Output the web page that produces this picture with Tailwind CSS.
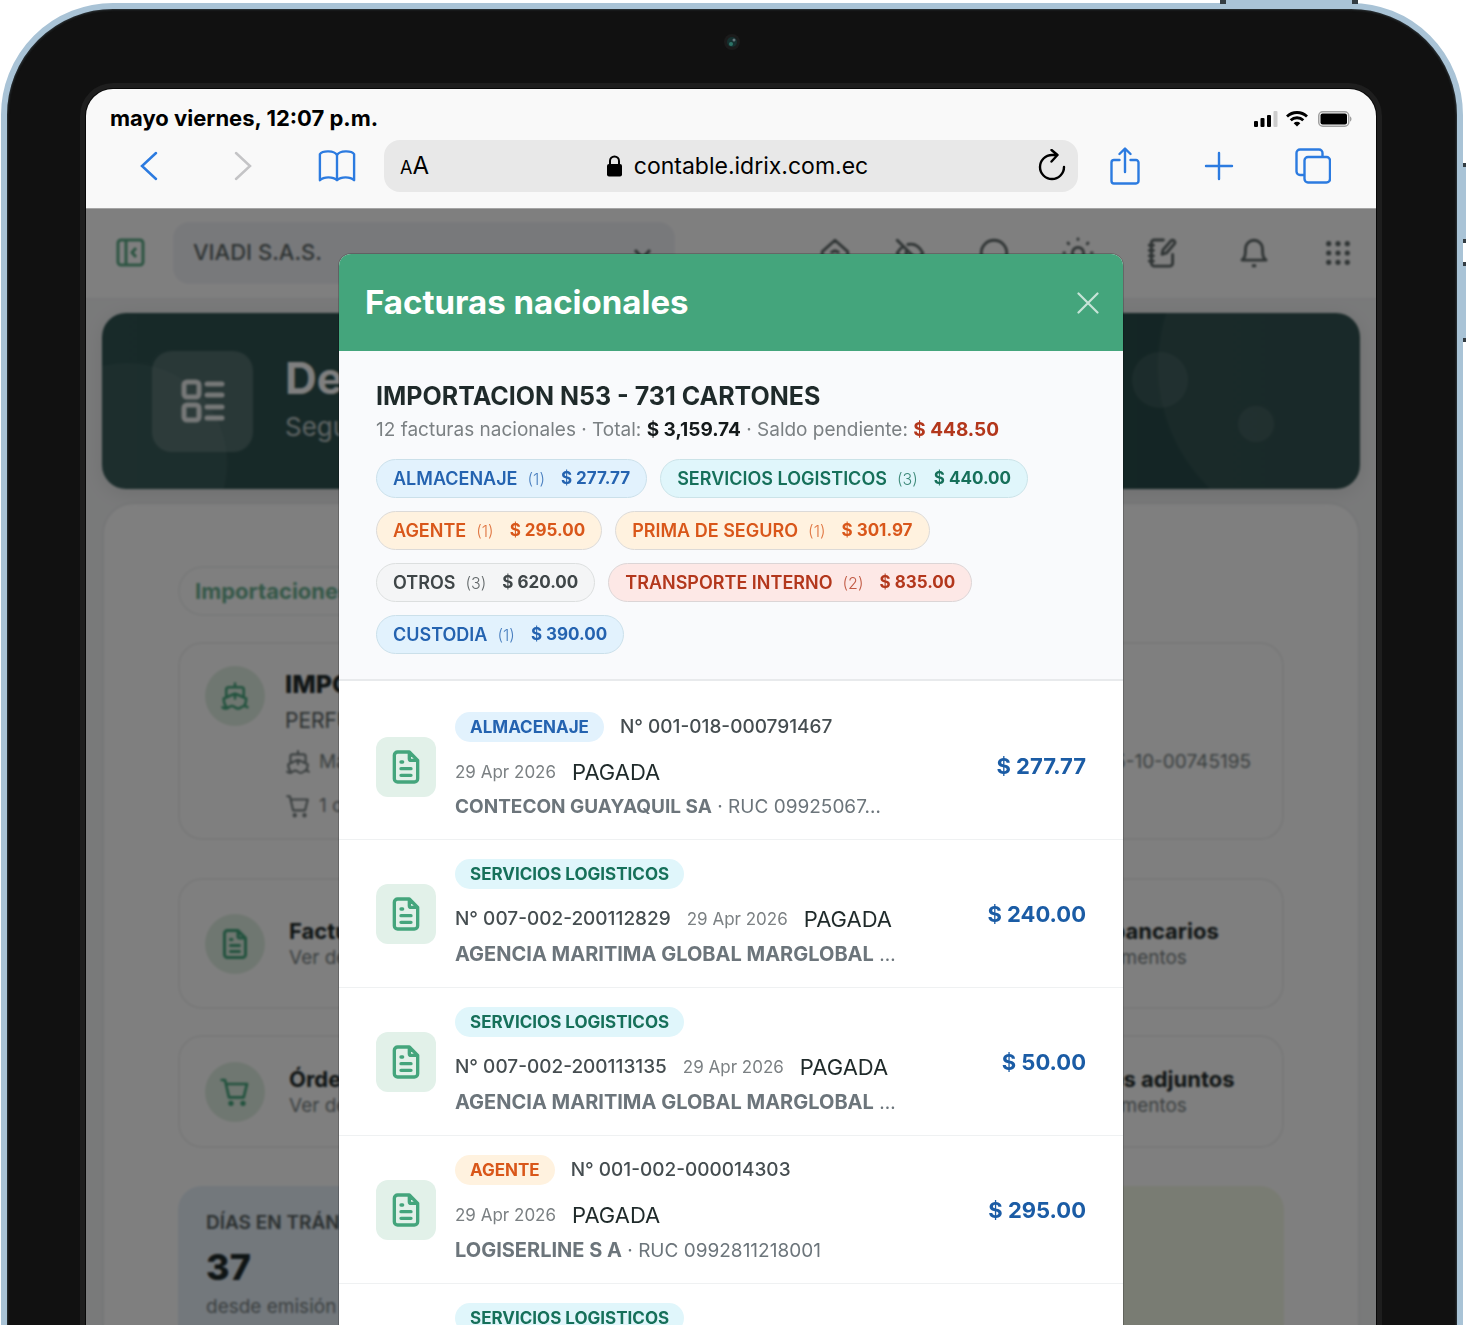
<!DOCTYPE html>
<html lang="es">
<head>
  <meta charset="UTF-8" />
  <meta name="viewport" content="width=device-width, initial-scale=1.0" />
  <title>Facturas nacionales</title>
  <script src="https://cdn.jsdelivr.net/npm/@tailwindcss/browser@4"></script>
</head>
<body class="bg-white font-['Inter',sans-serif] h-screen overflow-hidden text-[#1f2a2a]">

  <!-- Iconos compartidos -->
  <svg class="hidden">
    <symbol id="file" viewBox="0 0 24 24" fill="none" stroke="currentColor" stroke-width="2" stroke-linecap="round" stroke-linejoin="round"><path d="M14 3v4a1 1 0 0 0 1 1h4M17 21H7a2 2 0 0 1-2-2V5a2 2 0 0 1 2-2h7l5 5v11a2 2 0 0 1-2 2zM9 9h1M9 13h6M9 17h6"/></symbol>
    <symbol id="ship" viewBox="0 0 24 24" fill="none" stroke="currentColor" stroke-width="2" stroke-linecap="round" stroke-linejoin="round"><path d="M12 10.200V14M12 2v3M19 13V7a2 2 0 0 0-2-2H7a2 2 0 0 0-2 2v6M19.400 20A11.600 11.600 0 0 0 21 14l-8.200-3.600a2 2 0 0 0-1.600 0L3 14a11.600 11.600 0 0 0 2.800 7.800M2 21c.6.5 1.200 1 2.500 1 2.500 0 2.500-2 5-2 1.300 0 1.900.5 2.500 1 .6.5 1.200 1 2.500 1 2.500 0 2.500-2 5-2 1.300 0 1.900.5 2.500 1"/></symbol>
    <symbol id="cart" viewBox="0 0 24 24" fill="none" stroke="currentColor" stroke-width="2" stroke-linecap="round" stroke-linejoin="round"><path d="M2 3h2.500l3 13h11l2.500-10H5.500"/><circle cx="9" cy="20.500" r="1" fill="currentColor"/><circle cx="18" cy="20.500" r="1" fill="currentColor"/></symbol>
  </svg>

  <!-- Tableta -->
  <div class="relative mt-[3px] ml-px mr-[3px] h-[1700px] rounded-[112px] border-[6px] border-[#a9c3d6] bg-[#111] pt-[80px] pl-[79px] pr-[81px] shadow-[inset_0_0_2px_1px_#2c3438]">
    <div class="absolute -top-[10px] right-[99px] h-[5px] w-[138px] border-x-[6px] border-[#333c42] bg-[#a9c3d6]"></div>
    <div class="absolute top-[154px] -right-[10px] h-[80px] w-1 border-y-4 border-[#333c42] bg-[#a9c3d6]"></div>
    <div class="absolute top-[253px] -right-[10px] h-[80px] w-1 border-y-4 border-[#333c42] bg-[#a9c3d6]"></div>
    <svg class="absolute top-[24px] left-1/2 -translate-x-1/2" width="18" height="18" viewBox="0 0 18 18"><circle cx="9" cy="9" r="8" fill="#1b1b1b"/><circle cx="9" cy="9" r="5" fill="#16302f"/><circle cx="8" cy="11" r="2" fill="#2c7467"/><circle cx="11" cy="7" r="1.500" fill="#64747a"/></svg>

    <div class="flex h-full flex-col overflow-hidden rounded-[27px] bg-[#f9f9f9] shadow-[0_0_0_1px_#080808,0_0_0_6px_#1e1e1e]">

      <!-- Safari -->
      <header class="border-b border-[#a5a5a5] pb-4 text-black">
        <div class="flex h-[51px] items-center justify-between pt-2 pr-6 pl-6">
          <span class="text-[22px] font-bold">mayo viernes, 12:07 p.m.</span>
          <div class="flex items-center gap-2">
            <svg width="24" height="16" viewBox="0 0 24 16"><rect x="0" y="10" width="4" height="6" rx="1"/><rect x="6.500" y="7" width="4" height="9" rx="1"/><rect x="13" y="4" width="4" height="12" rx="1"/><rect x="19.500" y="0" width="4" height="16" rx="1" fill="#ccc"/></svg>
            <svg width="22" height="16" viewBox="0 0 22 16" fill="none" stroke="#000" stroke-width="2.800"><path d="M1 5.500a14.500 14.500 0 0 1 20 0M4.700 9.300a9 9 0 0 1 12.600 0"/><path d="M11 15.500l-3.300-3.300a4.700 4.700 0 0 1 6.600 0z" fill="#000" stroke="none"/></svg>
            <svg class="ml-[2px]" width="34" height="16" viewBox="0 0 34 16"><rect x=".75" y=".75" width="30" height="14.500" rx="4" fill="none" stroke="#a0a0a0" stroke-width="1.500"/><rect x="2.500" y="2.500" width="26.500" height="11" rx="2" /><path d="M32 5.500c2 .5 2 4.500 0 5z" fill="#a0a0a0"/></svg>
          </div>
        </div>
        <div class="flex items-center px-4 text-[#2c7be0]">
          <button aria-label="Atrás" class="flex w-[94px] justify-center"><svg width="18" height="30" viewBox="0 0 18 30" fill="none" stroke="currentColor" stroke-width="2.500" stroke-linecap="round"><path d="M16 2L2 15l14 13"/></svg></button>
          <button aria-label="Adelante" class="flex w-[94px] justify-center text-[#c4c4c6]"><svg width="18" height="30" viewBox="0 0 18 30" fill="none" stroke="currentColor" stroke-width="2.500" stroke-linecap="round"><path d="M2 2l14 13L2 28"/></svg></button>
          <button aria-label="Marcadores" class="flex w-[94px] justify-center"><svg width="38" height="34" viewBox="0 0 40 34" fill="none" stroke="currentColor" stroke-width="2.500" stroke-linejoin="round"><path d="M20 5.500C17 .5 5 .5 2 4.500V32c4-4 14-4 18 0c4-4 14-4 18 0V4.500C35 .5 23 .5 20 5.500zV32"/></svg></button>
          <div class="flex h-[52px] flex-1 items-center rounded-2xl bg-[#e8e8e8] pr-3 pl-4 text-black">
            <button aria-label="Tamaño de texto" class="flex items-baseline text-[18px]">A<span class="text-[24px]">A</span></button>
            <div class="ml-2 flex flex-1 items-center justify-center gap-3">
              <svg width="15" height="22" viewBox="0 0 15 22"><rect y="9" width="15" height="12.500" rx="2"/><path d="M3 10V6a4.500 4.500 0 0 1 9 0v4" fill="none" stroke="#000" stroke-width="2"/></svg>
              <input aria-label="Dirección" class="field-sizing-content bg-transparent text-[23px] outline-none" value="contable.idrix.com.ec" />
            </div>
            <button aria-label="Recargar"><svg width="28" height="34" viewBox="0 0 28 34" fill="none" stroke="#000" stroke-width="2.400" stroke-linecap="round" stroke-linejoin="round"><path d="M26 18a12 12 0 1 1-12-12h5M13.500 1l6 5-6 6.500"/></svg></button>
          </div>
          <button aria-label="Compartir" class="flex w-[94px] justify-center"><svg width="30" height="38" viewBox="0 0 30 38" fill="none" stroke="currentColor" stroke-width="2.400" stroke-linecap="round" stroke-linejoin="round"><path d="M9.500 13H4a2.500 2.500 0 0 0-2.500 2.500V34A2.500 2.500 0 0 0 4 36.500h22a2.500 2.500 0 0 0 2.500-2.500V15.500A2.500 2.500 0 0 0 26 13h-5.500M15 25V2M9.500 7L15 1.500 20.500 7"/></svg></button>
          <button aria-label="Nueva pestaña" class="flex w-[94px] justify-center"><svg width="30" height="30" viewBox="0 0 30 30" stroke="currentColor" stroke-width="2.400" stroke-linecap="round"><path d="M15 2v26M2 15h26"/></svg></button>
          <button aria-label="Pestañas" class="flex w-[94px] justify-center"><svg width="36" height="36" viewBox="0 0 36 36" fill="none" stroke="currentColor" stroke-width="2.400"><path d="M27.500 9V5a3.500 3.500 0 0 0-3.500-3.500H5A3.500 3.500 0 0 0 1.500 5v18.500A3.500 3.500 0 0 0 5 27h4"/><rect x="9.500" y="9" width="25.500" height="25.500" rx="3.500"/></svg></button>
        </div>
      </header>

      <div class="relative flex-1 overflow-hidden bg-[#f3f4f5]">

        <!-- Barra de la aplicación -->
        <nav class="flex h-[90px] items-center justify-between border-b border-[#eceded] bg-white pr-2 pb-[2px] pl-[30px] text-[#5e6868]">
          <div class="flex items-center gap-7">
            <button aria-label="Menú" class="text-[#5aa985]"><svg width="29" height="29" viewBox="0 0 29 29" fill="none" stroke="currentColor" stroke-width="3" stroke-linejoin="round"><rect x="2" y="2" width="25" height="25" rx="3"/><path d="M10 2v25M20 10l-4 4.500 4 4.500"/></svg></button>
            <div class="relative">
              <select aria-label="Empresa" class="h-[62px] w-[502px] appearance-none rounded-2xl bg-[#f1f3f7] px-5 text-[22px] font-medium"><option>VIADI S.A.S.</option></select>
              <svg class="absolute top-6 right-6" width="17" height="17" viewBox="0 0 17 17" fill="none" stroke="currentColor" stroke-width="3"><path d="M1 4l7.500 8L16 4"/></svg>
            </div>
          </div>
          <div class="flex items-center gap-6">
            <button aria-label="Inicio" class="flex w-[42px] justify-center"><svg width="34" height="34" viewBox="0 0 24 24" fill="none" stroke="currentColor" stroke-width="2" stroke-linejoin="round"><path d="M3 11l9-8 9 8v8a2 2 0 0 1-2 2H5a2 2 0 0 1-2-2zM9 12c2-2 4-2 6 0"/></svg></button>
            <button aria-label="Ocultar" class="flex w-15 justify-center"><svg width="34" height="34" viewBox="0 0 24 24" fill="none" stroke="currentColor" stroke-width="2" stroke-linecap="round"><path d="M3 3l18 18M10.500 6c5-1 8.500 2 10.500 6-.6 1.200-1.300 2.200-2.200 3M7 7.500c-1.600 1-3 2.500-4 4.500 3 6 8.500 7.500 13 5M10 10a2.800 2.800 0 0 0 4 4"/></svg></button>
            <button aria-label="Buscar" class="flex w-15 justify-center"><svg width="34" height="34" viewBox="0 0 24 24" fill="none" stroke="currentColor" stroke-width="2"><circle cx="12" cy="12" r="9"/></svg></button>
            <button aria-label="Tema" class="flex w-15 justify-center"><svg width="34" height="34" viewBox="0 0 24 24" fill="none" stroke="currentColor" stroke-width="2" stroke-linecap="round"><circle cx="12" cy="12" r="4"/><path d="M12 2v.5M12 21.500v.5M2 12h.5M21.500 12h.5M5 5l.4.4M18.600 18.600l.4.4M19 5l-.4.4M5.400 18.600l-.4.4"/></svg></button>
            <button aria-label="Notas" class="flex w-15 justify-center"><svg width="34" height="34" viewBox="0 0 24 24" fill="none" stroke="currentColor" stroke-width="2" stroke-linecap="round" stroke-linejoin="round"><path d="M13 2.800H6.500a2 2 0 0 0-2 2v14.500a2 2 0 0 0 2 2h11a2 2 0 0 0 2-2V13M3 6.500h3M3 10.200h3M3 14h3M3 17.700h3M18.300 3.400a1.500 1.500 0 0 1 2.400 2.200l-5.500 6.400-3.200 1 .7-3.200z"/></svg></button>
            <button aria-label="Avisos" class="ml-2 flex w-15 justify-center"><svg width="34" height="34" viewBox="0 0 24 24" fill="none" stroke="currentColor" stroke-width="2" stroke-linejoin="round"><path d="M3.500 17c2-1.500 2.500-3 2.500-8a6 6 0 0 1 12 0c0 5 .5 6.500 2.500 8zM10.500 21h3"/></svg></button>
            <button aria-label="Aplicaciones" class="flex w-15 justify-center"><svg width="26" height="26" viewBox="0 0 28 28" fill="currentColor"><circle cx="4" cy="4" r="2.800"/><circle cx="14" cy="4" r="2.800"/><circle cx="24" cy="4" r="2.800"/><circle cx="4" cy="14" r="2.800"/><circle cx="14" cy="14" r="2.800"/><circle cx="24" cy="14" r="2.800"/><circle cx="4" cy="24" r="2.800"/><circle cx="14" cy="24" r="2.800"/><circle cx="24" cy="24" r="2.800"/></svg></button>
          </div>
        </nav>

        <!-- Encabezado -->
        <main class="px-4 pt-[14px]">
          <section class="relative flex h-[176px] items-center gap-8 overflow-hidden rounded-3xl bg-linear-to-r from-[#305452] to-[#284a49] px-[50px] shadow-[0_4px_20px_#00000018]">
            <div class="absolute top-[50px] -left-[75px] size-[200px] rounded-full bg-white/5"></div>
            <div class="absolute -top-[118px] -right-[140px] size-[342px] rounded-full bg-white/5"></div>
            <div class="absolute top-[39px] right-[172px] size-[56px] rounded-full bg-white/8"></div>
            <div class="absolute top-[93px] right-[86px] size-[36px] rounded-full bg-white/8"></div>
            <div class="relative flex size-[101px] items-center justify-center rounded-[20px] bg-white/17 text-white/90">
              <svg width="44" height="44" viewBox="0 0 44 44" fill="none" stroke="currentColor" stroke-width="5" stroke-linecap="round"><rect x="3" y="3" width="15" height="15" rx="3"/><rect x="3" y="26" width="15" height="15" rx="3"/><path d="M26 5h15M26 16h15M26 28h15M26 39h15"/></svg>
            </div>
            <div>
              <h1 class="text-[44px] leading-[52px] font-bold text-white">Detalle de importación</h1>
              <p class="text-[26px] leading-[46px] text-white/70">Seguimiento de costos</p>
            </div>
          </section>

          <section class="mt-[13px] flex h-[1100px] flex-col rounded-[32px] border-2 border-[#ebedee] bg-white px-[74px] pt-[62px]">
            <div><span class="inline-flex h-[50px] items-center rounded-full border-2 border-[#f2f3f3] px-[15px] text-[22px] font-bold text-[#6bb091]">Importaciones</span></div>

            <article class="mt-[26px] flex h-[198px] gap-5 rounded-3xl border-2 border-[#f1f2f2] px-[25px] pt-[22px]">
              <div class="flex size-[60px] shrink-0 items-center justify-center rounded-full bg-[#dfeee2] text-[#44a57c]"><svg class="size-[30px]"><use href="#ship"/></svg></div>
              <div class="flex-1 text-[#788283]">
                <h2 class="text-[25px] leading-[36px] font-extrabold text-[#1f2a2a]">IMPORTACION N53</h2>
                <p class="text-[21px] leading-[38px] text-[#566060]">PERFUMERIA</p>
                <div class="mt-1 flex items-center justify-between pr-[6px] text-[19px] leading-[36px]"><span class="flex items-center gap-2"><svg class="size-[26px]"><use href="#ship"/></svg>Maersk</span><span>028-2025-10-00745195</span></div>
                <p class="mt-2 flex items-center gap-2 text-[19px] leading-[36px]"><svg class="size-[26px]"><use href="#cart"/></svg>1 contenedor</p>
              </div>
            </article>

            <div class="mt-[38px] grid grid-cols-3 gap-x-5 gap-y-[26px]">
              <article class="flex h-[131px] items-center gap-6 rounded-3xl border-2 border-[#f1f2f2] px-[25px]">
                <div class="flex size-[60px] shrink-0 items-center justify-center rounded-full bg-[#dfeee2] text-[#44a57c]"><svg class="size-9"><use href="#file"/></svg></div>
                <div><h3 class="text-[22px] leading-[28px] font-bold">Facturas</h3><p class="text-[19px] leading-[26px] text-[#788283]">Ver detalle</p></div>
              </article>
              <article class="rounded-3xl border-2 border-[#f1f2f2]"></article>
              <article class="flex items-center gap-6 rounded-3xl border-2 border-[#f1f2f2] px-[25px]">
                <div class="size-[60px] shrink-0 rounded-full bg-[#dfeee2]"></div>
                <div class="whitespace-nowrap"><h3 class="text-[22px] leading-[28px] font-bold">Pagos bancarios</h3><p class="text-[19px] leading-[26px] text-[#788283]">Ver documentos</p></div>
              </article>
              <article class="flex h-[113px] items-center gap-6 rounded-3xl border-2 border-[#f1f2f2] px-[25px]">
                <div class="flex size-[60px] shrink-0 items-center justify-center rounded-full bg-[#dfeee2] text-[#44a57c]"><svg class="size-8"><use href="#cart"/></svg></div>
                <div><h3 class="text-[22px] leading-[28px] font-bold">Órdenes</h3><p class="text-[19px] leading-[26px] text-[#788283]">Ver detalle</p></div>
              </article>
              <article class="rounded-3xl border-2 border-[#f1f2f2]"></article>
              <article class="flex items-center gap-6 rounded-3xl border-2 border-[#f1f2f2] px-[25px]">
                <div class="size-[60px] shrink-0 rounded-full bg-[#dfeee2]"></div>
                <div class="whitespace-nowrap"><h3 class="text-[22px] leading-[28px] font-bold">Archivos adjuntos</h3><p class="text-[19px] leading-[26px] text-[#788283]">Ver documentos</p></div>
              </article>
            </div>

            <div class="mt-[38px] grid grid-cols-3 gap-5">
              <div class="h-[220px] rounded-3xl bg-[#e6f0f9] px-7 pt-6 text-[#788283]">
                <p class="text-[19px] leading-[26px] font-semibold text-[#566060]">DÍAS EN TRÁNSITO</p>
                <p class="text-[36px] leading-[62px] font-extrabold text-[#1f2a2a]">37</p>
                <p class="text-[19px] leading-[18px]">desde emisión</p>
              </div>
              <div class="rounded-3xl bg-[#e6f0f9]"></div>
              <div class="rounded-3xl bg-[#f3f8e6]"></div>
            </div>
          </section>
        </main>

        <!-- Modal -->
        <div class="absolute inset-0 flex justify-center bg-black/50 pt-[45px] backdrop-blur-[1px]">
          <div role="dialog" aria-labelledby="titulo" class="w-[784px] max-w-full overflow-hidden rounded-t-xl bg-white ring-1 ring-black/20">
            <div class="flex h-[97px] items-center justify-between bg-[#44a57c] pr-[24px] pl-[26px] text-white">
              <h2 id="titulo" class="text-[33px] font-bold">Facturas nacionales</h2>
              <button aria-label="Cerrar" class="text-white/70"><svg width="22" height="22" viewBox="0 0 22 22" stroke="currentColor" stroke-width="2.200" stroke-linecap="round"><path d="M1.500 1.500l19 19M20.500 1.500l-19 19"/></svg></button>
            </div>

            <div class="border-b-2 border-[#e8eaec] bg-[#f9fafc] px-[37px] pt-[27px] pb-[25px]">
              <h3 class="text-[25px] leading-[36px] font-bold">IMPORTACION N53 - 731 CARTONES</h3>
              <p class="text-[19px] leading-[32px] text-[#7b8083]">12 facturas nacionales · Total: <b class="font-bold text-[#14191a]">$ 3,159.74</b> · Saldo pendiente: <b class="font-bold text-[#b3371c]">$ 448.50</b></p>
              <div class="mt-[13px] flex flex-wrap gap-[13px] text-[18px] font-semibold">
                <span class="flex h-[39px] items-center rounded-full border border-[#cbe0ea] bg-[#e2f2fd] px-4 text-[#2463b0]">ALMACENAJE<small class="mr-4 ml-[10px] text-[16px] font-light opacity-80">(1)</small><b class="text-[17px] font-bold">$ 277.77</b></span>
                <span class="flex h-[39px] items-center rounded-full border border-[#cbe3e8] bg-[#e0f6fb] px-4 text-[#16705a]">SERVICIOS LOGISTICOS<small class="mr-4 ml-[10px] text-[16px] font-light opacity-80">(3)</small><b class="text-[17px] font-bold">$ 440.00</b></span>
                <span class="flex h-[39px] items-center rounded-full border border-[#dcdad8] bg-[#fff2df] px-4 text-[#d9571a]">AGENTE<small class="mr-4 ml-[10px] text-[16px] font-light opacity-80">(1)</small><b class="text-[17px] font-bold">$ 295.00</b></span>
                <span class="flex h-[39px] items-center rounded-full border border-[#dcdad8] bg-[#fff2df] px-4 text-[#d9571a]">PRIMA DE SEGURO<small class="mr-4 ml-[10px] text-[16px] font-light opacity-80">(1)</small><b class="text-[17px] font-bold">$ 301.97</b></span>
                <span class="flex h-[39px] items-center rounded-full border border-[#dcdfdf] bg-[#f4f5f6] px-4 text-[#3f4648]">OTROS<small class="mr-4 ml-[10px] text-[16px] font-light opacity-80">(3)</small><b class="text-[17px] font-bold">$ 620.00</b></span>
                <span class="flex h-[39px] items-center rounded-full border border-[#dcd5d6] bg-[#fde8e6] px-4 text-[#b3371c]">TRANSPORTE INTERNO<small class="mr-4 ml-[10px] text-[16px] font-light opacity-80">(2)</small><b class="text-[17px] font-bold">$ 835.00</b></span>
                <span class="flex h-[39px] items-center rounded-full border border-[#cbe0ea] bg-[#e2f2fd] px-4 text-[#2463b0]">CUSTODIA<small class="mr-4 ml-[10px] text-[16px] font-light opacity-80">(1)</small><b class="text-[17px] font-bold">$ 390.00</b></span>
              </div>
            </div>

            <ul class="pt-3">
              <li class="flex items-center gap-[19px] border-b border-[#eff1f2] px-[37px] pt-[19px] pb-[18px]">
                <div class="flex size-[60px] shrink-0 items-center justify-center rounded-xl bg-[#e2f1e9] text-[#44a57c]"><svg class="size-10"><use href="#file"/></svg></div>
                <div class="min-w-0 flex-1">
                  <div class="flex flex-wrap items-center gap-x-4 gap-y-[15px] leading-[30px]">
                    <span class="rounded-full bg-[#e2f2fd] px-[15px] text-[17px] font-bold text-[#2463b0]">ALMACENAJE</span>
                    <span class="text-[19px] font-medium text-[#454d50]">N° 001-018-000791467</span>
                    <span class="text-[17px] text-[#7b8083]">29 Apr 2026</span>
                    <span class="text-[22px]">PAGADA</span>
                  </div>
                  <p class="mt-[6px] truncate text-[19px] leading-[28px] text-[#6c757b]"><b>CONTECON GUAYAQUIL SA</b> · RUC 09925067…</p>
                </div>
                <strong class="w-[160px] shrink-0 text-right text-[22px] font-bold text-[#1b5ca5]">$ 277.77</strong>
              </li>
              <li class="flex items-center gap-[19px] border-b border-[#eff1f2] px-[37px] pt-[19px] pb-[18px]">
                <div class="flex size-[60px] shrink-0 items-center justify-center rounded-xl bg-[#e2f1e9] text-[#44a57c]"><svg class="size-10"><use href="#file"/></svg></div>
                <div class="min-w-0 flex-1">
                  <div class="flex flex-wrap items-center gap-x-4 gap-y-[15px] leading-[30px]">
                    <span class="rounded-full bg-[#e0f6fb] px-[15px] text-[17px] font-bold text-[#16705a]">SERVICIOS LOGISTICOS</span>
                    <span class="text-[19px] font-medium text-[#454d50]">N° 007-002-200112829</span>
                    <span class="text-[17px] text-[#7b8083]">29 Apr 2026</span>
                    <span class="text-[22px]">PAGADA</span>
                  </div>
                  <p class="mt-[6px] truncate text-[19px] leading-[28px] text-[#6c757b]"><b class="text-[20px]">AGENCIA MARITIMA GLOBAL MARGLOBAL</b> …</p>
                </div>
                <strong class="w-[160px] shrink-0 text-right text-[22px] font-bold text-[#1b5ca5]">$ 240.00</strong>
              </li>
              <li class="flex items-center gap-[19px] border-b border-[#eff1f2] px-[37px] pt-[19px] pb-[18px]">
                <div class="flex size-[60px] shrink-0 items-center justify-center rounded-xl bg-[#e2f1e9] text-[#44a57c]"><svg class="size-10"><use href="#file"/></svg></div>
                <div class="min-w-0 flex-1">
                  <div class="flex flex-wrap items-center gap-x-4 gap-y-[15px] leading-[30px]">
                    <span class="rounded-full bg-[#e0f6fb] px-[15px] text-[17px] font-bold text-[#16705a]">SERVICIOS LOGISTICOS</span>
                    <span class="text-[19px] font-medium text-[#454d50]">N° 007-002-200113135</span>
                    <span class="text-[17px] text-[#7b8083]">29 Apr 2026</span>
                    <span class="text-[22px]">PAGADA</span>
                  </div>
                  <p class="mt-[6px] truncate text-[19px] leading-[28px] text-[#6c757b]"><b class="text-[20px]">AGENCIA MARITIMA GLOBAL MARGLOBAL</b> …</p>
                </div>
                <strong class="w-[160px] shrink-0 text-right text-[22px] font-bold text-[#1b5ca5]">$ 50.00</strong>
              </li>
              <li class="flex items-center gap-[19px] border-b border-[#eff1f2] px-[37px] pt-[19px] pb-[18px]">
                <div class="flex size-[60px] shrink-0 items-center justify-center rounded-xl bg-[#e2f1e9] text-[#44a57c]"><svg class="size-10"><use href="#file"/></svg></div>
                <div class="min-w-0 flex-1">
                  <div class="flex flex-wrap items-center gap-x-4 gap-y-[15px] leading-[30px]">
                    <span class="rounded-full bg-[#fff2df] px-[15px] text-[17px] font-bold text-[#d9571a]">AGENTE</span>
                    <span class="text-[19px] font-medium text-[#454d50]">N° 001-002-000014303</span>
                    <span class="text-[17px] text-[#7b8083]">29 Apr 2026</span>
                    <span class="text-[22px]">PAGADA</span>
                  </div>
                  <p class="mt-[6px] truncate text-[19px] leading-[28px] text-[#6c757b]"><b class="text-[20px]">LOGISERLINE S A</b> · RUC 0992811218001</p>
                </div>
                <strong class="w-[160px] shrink-0 text-right text-[22px] font-bold text-[#1b5ca5]">$ 295.00</strong>
              </li>
              <li class="flex items-start gap-[19px] px-[37px] pt-[19px] pb-[18px]">
                <div class="w-[60px] shrink-0"></div>
                <div class="leading-[30px]"><span class="inline-block rounded-full bg-[#e0f6fb] px-[15px] text-[17px] font-bold text-[#16705a]">SERVICIOS LOGISTICOS</span></div>
              </li>
            </ul>
          </div>
        </div>
      </div>
    </div>
  </div>
</body>
</html>
